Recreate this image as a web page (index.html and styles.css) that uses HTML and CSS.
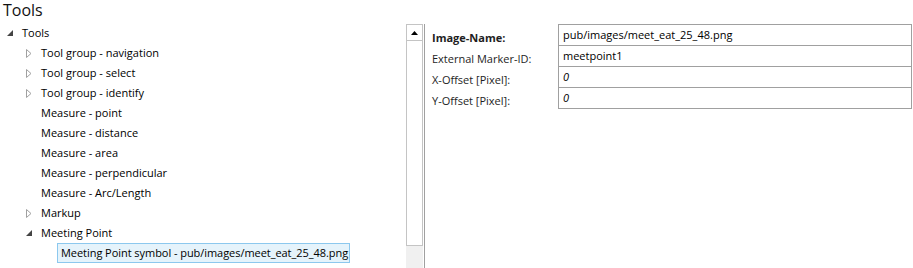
FILE: index.html
```html
<!DOCTYPE html>
<html>
<head>
<meta charset="utf-8">
<title>Tools</title>
<link rel="stylesheet" href="styles.css">
</head>
<body>
<div class="title">Tools</div>
<div class="main">
  <div class="tree">
    <div class="row l0"><span class="exp"><svg width="6" height="6" viewBox="0 0 6 6"><path d="M6 0V6H0Z" fill="#444"/></svg></span><span class="lbl">Tools</span></div>
    <div class="row l1"><span class="exp"><svg width="6" height="9" viewBox="0 0 6 9"><path d="M0.5 0.5L5 4.5L0.5 8.5Z" fill="none" stroke="#a0a0a0"/></svg></span><span class="lbl">Tool group - navigation</span></div>
    <div class="row l1"><span class="exp"><svg width="6" height="9" viewBox="0 0 6 9"><path d="M0.5 0.5L5 4.5L0.5 8.5Z" fill="none" stroke="#a0a0a0"/></svg></span><span class="lbl">Tool group - select</span></div>
    <div class="row l1"><span class="exp"><svg width="6" height="9" viewBox="0 0 6 9"><path d="M0.5 0.5L5 4.5L0.5 8.5Z" fill="none" stroke="#a0a0a0"/></svg></span><span class="lbl">Tool group - identify</span></div>
    <div class="row l1"><span class="exp"></span><span class="lbl">Measure - point</span></div>
    <div class="row l1"><span class="exp"></span><span class="lbl">Measure - distance</span></div>
    <div class="row l1"><span class="exp"></span><span class="lbl">Measure - area</span></div>
    <div class="row l1"><span class="exp"></span><span class="lbl">Measure - perpendicular</span></div>
    <div class="row l1"><span class="exp"></span><span class="lbl">Measure - Arc/Length</span></div>
    <div class="row l1"><span class="exp"><svg width="6" height="9" viewBox="0 0 6 9"><path d="M0.5 0.5L5 4.5L0.5 8.5Z" fill="none" stroke="#a0a0a0"/></svg></span><span class="lbl">Markup</span></div>
    <div class="row l1"><span class="exp"><svg width="6" height="6" viewBox="0 0 6 6"><path d="M6 0V6H0Z" fill="#444"/></svg></span><span class="lbl">Meeting Point</span></div>
    <div class="row l2"><span class="exp"></span><span class="lbl sel">Meeting Point symbol - pub/images/meet_eat_25_48.png</span></div>
  </div>
  <div class="vscroll">
    <div class="sbtn"><svg width="7" height="4" viewBox="0 0 7 4"><path d="M0 4L3.5 0L7 4Z" fill="#000"/></svg></div>
    <div class="thumb"></div>
    <div class="track"></div>
  </div>
  <div class="sep"></div>
  <div class="props">
    <div class="labels">
      <div class="plabel bold">Image-Name:</div>
      <div class="plabel">External Marker-ID:</div>
      <div class="plabel">X-Offset [Pixel]:</div>
      <div class="plabel">Y-Offset [Pixel]:</div>
    </div>
    <div class="values">
      <div class="pval">pub/images/meet_eat_25_48.png</div>
      <div class="pval">meetpoint1</div>
      <div class="pval it">0</div>
      <div class="pval it">0</div>
    </div>
  </div>
</div>
</body>
</html>
```
FILE: styles.css
```css
html, body {
  margin: 0;
  padding: 0;
  background: #fff;
}
body {
  width: 913px;
  height: 268px;
  overflow: hidden;
  font-family: "Open Sans", "Noto Sans", sans-serif;
  font-size: 11px;
  color: #000;
}
.title {
  height: 23px;
  line-height: 21px;
  padding-left: 3px;
  font-size: 16px;
  color: #111;
}
.main {
  display: flex;
  height: 245px;
}
.tree {
  width: 406px;
  flex: none;
}
.row {
  height: 20px;
  display: flex;
  align-items: center;
  white-space: nowrap;
}
.l0 { padding-left: 5px; }
.l1 { padding-left: 24px; }
.l2 { padding-left: 44px; }
.exp {
  width: 13px;
  height: 20px;
  flex: none;
  display: flex;
  align-items: center;
  padding-left: 2px;
  box-sizing: border-box;
}
.exp svg { display: block; }
.lbl {
  display: block;
  height: 18px;
  line-height: 18px;
  padding: 0 3px;
  border: 1px solid transparent;
}
.lbl.sel {
  background: #e5f3fb;
  border-color: #8cc8ee;
  padding-right: 1px;
  letter-spacing: -0.05px;
}
.vscroll {
  width: 17px;
  flex: none;
  margin-top: 1px;
  display: flex;
  flex-direction: column;
}
.sbtn {
  height: 17px;
  box-sizing: border-box;
  border: 1px solid #c4c4c4;
  display: flex;
  align-items: center;
  justify-content: center;
  background: #fff;
}
.thumb {
  height: 205px;
  box-sizing: border-box;
  border: 1px solid #c4c4c4;
  border-top: none;
  background: #fff;
}
.track {
  flex: 1;
  background: #f0f0f0;
}
.sep {
  width: 1px;
  margin-left: 1px;
  margin-top: 1px;
  background: #a0a0a0;
  flex: none;
}
.props {
  display: flex;
  margin-top: 1px;
  padding-left: 7px;
}
.labels {
  width: 126px;
  padding-top: 3px;
}
.plabel {
  height: 21px;
  line-height: 21px;
  color: #1e1e1e;
}
.bold { font-weight: 700; }
.values {
  width: 352px;
  border: 1px solid #a0a0a0;
  border-bottom: none;
  align-self: flex-start;
}
.pval {
  height: 20px;
  line-height: 19px;
  padding-left: 4px;
  border-bottom: 1px solid #a0a0a0;
}
.it { font-style: italic; }
```
